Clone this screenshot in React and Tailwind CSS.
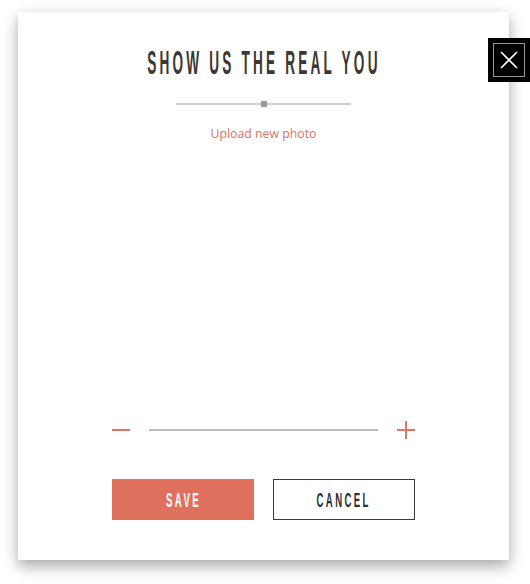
import React from 'react';

const condensed = { fontFamily: '"Liberation Sans Narrow", "Liberation Sans", Arial, sans-serif' };

const CloseButton = () => (
  <button className="absolute left-[470px] top-[26px] w-[42px] h-[44px] bg-black p-[5px]">
    <div className="w-full h-full border border-[#9a9a9a] flex items-center justify-center">
      <svg width="20" height="20" viewBox="0 0 20 20" fill="none" stroke="white" strokeWidth="1.6">
        <path d="M2 2 L18 18 M18 2 L2 18" />
      </svg>
    </div>
  </button>
);

const Slider = ({ className = '', handle = false, lineClass = '' }) => (
  <div className={`relative flex items-center ${className}`}>
    <div className={`w-full ${lineClass}`} />
    {handle && <div className="absolute left-1/2 -translate-x-1/2 w-[6px] h-[6px] bg-[#9b9b9b]" />}
  </div>
);

const App = () => {
  return (
    <div className="min-h-screen bg-white pt-[12px] pl-[18px]">
      <div className="relative w-[491px] h-[548px] bg-white shadow-[0_6px_14px_rgba(0,0,0,0.35)] flex flex-col items-center">
        <CloseButton />

        <h1 className="mt-[30px] h-[40px] flex items-center justify-center text-[#3b3733] text-[34px] leading-none" style={condensed}>
          <span className="inline-block scale-x-[0.4] tracking-[8px] font-bold whitespace-nowrap">SHOW US THE REAL YOU</span>
        </h1>

        <Slider className="mt-[19px] w-[175px] h-[6px]" handle lineClass="h-[2px] bg-[#cfcfcf]" />

        <a href="#" className="mt-[18px] text-[12.3px] text-[#e2705d]" style={{ fontFamily: '"Open Sans", sans-serif' }}>
          Upload new photo
        </a>

        <div className="flex-1 w-full" />

        <div className="flex items-center w-[303px] h-[20px]">
          <button className="w-[18px] h-[18px] flex items-center">
            <div className="w-[18px] h-[2px] bg-[#e6735f]" />
          </button>
          <div className="flex-1 mx-[19px] h-[2px] bg-[#bdbbb8]" />
          <button className="relative w-[18px] h-[18px] flex items-center justify-center">
            <div className="w-[18px] h-[2px] bg-[#e6735f]" />
            <div className="absolute w-[2px] h-[18px] bg-[#e6735f]" />
          </button>
        </div>

        <div className="mt-[39px] mb-[40px] flex gap-[19px]">
          <button className="w-[142px] h-[41px] bg-[#e0705e] text-white text-[20px] leading-none flex items-center justify-center" style={condensed}>
            <span className="inline-block scale-x-[0.48] tracking-[5px] font-bold">SAVE</span>
          </button>
          <button className="w-[142px] h-[41px] border border-[#3a3a3a] text-[#2f2f2f] text-[20px] leading-none flex items-center justify-center" style={condensed}>
            <span className="inline-block scale-x-[0.48] tracking-[5px] font-bold">CANCEL</span>
          </button>
        </div>
      </div>
    </div>
  );
};

export default App;
